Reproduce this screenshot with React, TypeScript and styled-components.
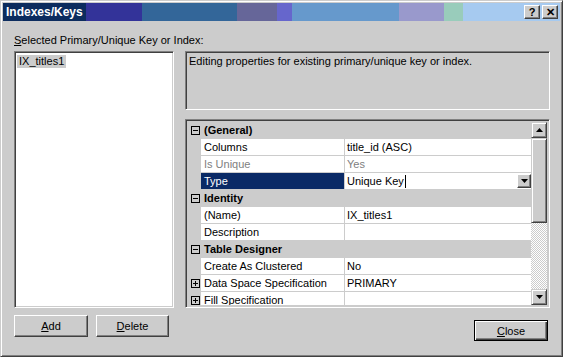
import React from 'react';
import styled, { createGlobalStyle } from 'styled-components';

const face = '#cccccc';
const dark = '#404040';
const shadow = '#808080';
const navy = '#0a2a66';

const rows = [
  { kind: 'cat', name: '(General)' },
  { name: 'Columns', value: 'title_id (ASC)' },
  { name: 'Is Unique', value: 'Yes', disabled: true },
  { name: 'Type', value: 'Unique Key', selected: true },
  { kind: 'cat', name: 'Identity' },
  { name: '(Name)', value: 'IX_titles1' },
  { name: 'Description', value: '' },
  { kind: 'cat', name: 'Table Designer' },
  { name: 'Create As Clustered', value: 'No' },
  { name: 'Data Space Specification', value: 'PRIMARY', expand: true },
  { name: 'Fill Specification', value: '', expand: true },
];

const GlobalStyle = createGlobalStyle`
  html, body {
    margin: 0;
    padding: 0;
    background: ${face};
  }
  body {
    font-family: 'Liberation Sans', Arial, sans-serif;
    font-size: 11px;
    color: #000;
  }
`;

const Window = styled.div`
  width: 563px;
  height: 357px;
  box-sizing: border-box;
  background: ${face};
  border: 1px solid;
  border-color: ${face} ${dark} ${dark} ${face};
  box-shadow: inset 1px 1px #fff, inset -1px -1px ${shadow};
  padding: 2px;
  display: flex;
  flex-direction: column;
`;

const TitleBar = styled.div`
  height: 18px;
  flex: none;
  display: flex;
  align-items: center;
  padding-left: 3px;
  background: linear-gradient(
    to right,
    #0c2c5e 0 83px,
    #333399 83px 139px,
    #336699 139px 234px,
    #666699 234px 274px,
    #6666cc 274px 289px,
    #6699cc 289px 396px,
    #9999cc 396px 441px,
    #99ccbb 441px 460px,
    #a6caf0 460px
  );
`;

const Title = styled.span`
  flex: 1;
  color: #fff;
  font-weight: bold;
  font-size: 12px;
`;

const CaptionButton = styled.div`
  width: 16px;
  height: 14px;
  box-sizing: border-box;
  margin-right: 2px;
  background: ${face};
  border: 1px solid;
  border-color: #fff ${dark} ${dark} #fff;
  box-shadow: inset -1px -1px ${shadow};
  display: flex;
  align-items: center;
  justify-content: center;
  font-weight: bold;
  font-size: 11px;
  line-height: 1;
`;

const Content = styled.div`
  flex: 1;
  display: flex;
  flex-direction: column;
  padding: 13px 10px 0 11px;
`;

const Label = styled.div`
  line-height: 13px;
  height: 13px;
  margin-bottom: 4px;
  white-space: nowrap;
`;

const Main = styled.div`
  height: 257px;
  display: flex;
  gap: 11px;
`;

const Sunken = styled.div`
  box-sizing: border-box;
  border: 1px solid;
  border-color: ${shadow} #fff #fff ${shadow};
  box-shadow: inset 1px 1px ${dark}, inset -1px -1px ${face};
`;

const ListBox = styled(Sunken)`
  width: 160px;
  flex: none;
  background: #fff;
  padding: 3px 2px;
`;

const ListItem = styled.div<{ $active?: boolean }>`
  display: inline-block;
  padding: 0 2px;
  line-height: 13px;
  background: ${(p) => (p.$active ? face : 'transparent')};
`;

const RightColumn = styled.div`
  flex: 1;
  display: flex;
  flex-direction: column;
  gap: 9px;
`;

const DescriptionBox = styled(Sunken)`
  height: 59px;
  padding: 3px 3px;
  line-height: 13px;
`;

const PropertyGrid = styled(Sunken)`
  height: 189px;
  padding: 2px;
  display: flex;
  background: ${face};
`;

const Rows = styled.div`
  flex: 1;
  overflow: hidden;
`;

const Row = styled.div`
  display: grid;
  grid-template-columns: 13px 144px 1fr;
  height: 17px;
`;

const Gutter = styled.div`
  display: flex;
  align-items: center;
  justify-content: center;
  padding-left: 1px;
  background: ${face};
`;

const CategoryName = styled.div`
  grid-column: 2 / 4;
  font-weight: bold;
  line-height: 17px;
  padding-left: 3px;
`;

const NameCell = styled.div<{ $selected?: boolean; $disabled?: boolean }>`
  box-sizing: border-box;
  background: ${(p) => (p.$selected ? navy : '#fff')};
  color: ${(p) => (p.$selected ? '#fff' : p.$disabled ? shadow : '#000')};
  border-right: 1px solid ${face};
  border-bottom: 1px solid ${face};
  padding-left: 3px;
  line-height: 16px;
  white-space: nowrap;
  overflow: hidden;
`;

const ValueCell = styled.div<{ $disabled?: boolean }>`
  box-sizing: border-box;
  background: #fff;
  color: ${(p) => (p.$disabled ? shadow : '#000')};
  border-bottom: 1px solid ${face};
  padding-left: 2px;
  line-height: 16px;
  display: flex;
  align-items: center;
  white-space: nowrap;
`;

const Caret = styled.span`
  display: inline-block;
  width: 1px;
  height: 13px;
  background: #000;
  margin-left: 1px;
`;

const DropButton = styled.div`
  margin-left: auto;
  width: 14px;
  height: 14px;
  box-sizing: border-box;
  background: ${face};
  border: 1px solid;
  border-color: #fff ${dark} ${dark} #fff;
  box-shadow: inset -1px -1px ${shadow};
  display: flex;
  align-items: center;
  justify-content: center;
`;

const ScrollBar = styled.div`
  width: 16px;
  flex: none;
  display: flex;
  flex-direction: column;
`;

const ScrollButton = styled.div`
  height: 16px;
  box-sizing: border-box;
  background: ${face};
  border: 1px solid;
  border-color: ${face} ${dark} ${dark} ${face};
  box-shadow: inset 1px 1px #fff, inset -1px -1px ${shadow};
  display: flex;
  align-items: center;
  justify-content: center;
`;

const Thumb = styled(ScrollButton)`
  height: 85px;
`;

const Track = styled.div`
  flex: 1;
  background: repeating-conic-gradient(#fff 0 25%, ${face} 0 50%) 0 0 / 2px 2px;
`;

const Footer = styled.div`
  display: flex;
  align-items: flex-start;
  gap: 8px;
  margin-top: 7px;
  padding-right: 2px;
`;

const Button = styled.div<{ $width: number; $default?: boolean }>`
  width: ${(p) => p.$width}px;
  height: ${(p) => (p.$default ? 21 : 22)}px;
  box-sizing: border-box;
  background: ${face};
  border: 1px solid;
  border-color: ${(p) => (p.$default ? '#000' : `#fff ${dark} ${dark} #fff`)};
  box-shadow: ${(p) =>
    p.$default
      ? `inset 1px 1px #fff, inset -1px -1px ${dark}, inset -2px -2px ${shadow}`
      : `inset -1px -1px ${shadow}`};
  display: flex;
  align-items: center;
  justify-content: center;
  margin-top: ${(p) => (p.$default ? '5px' : '0')};
  margin-left: ${(p) => (p.$default ? 'auto' : '0')};
`;

const Arrow = ({ down }: { down?: boolean }) => (
  <svg width="7" height="4" viewBox="0 0 7 4">
    <polygon points={down ? '0,0 7,0 3.5,4' : '0,4 7,4 3.5,0'} fill="#000" />
  </svg>
);

const ExpandBox = ({ open }: { open?: boolean }) => (
  <svg width="9" height="9" viewBox="0 0 9 9">
    <rect x="0.5" y="0.5" width="8" height="8" fill="none" stroke="#000" />
    <line x1="2" y1="4.5" x2="7" y2="4.5" stroke="#000" />
    {!open && <line x1="4.5" y1="2" x2="4.5" y2="7" stroke="#000" />}
  </svg>
);

const App = () => {
  return (
    <>
      <GlobalStyle />
      <Window>
        <TitleBar>
          <Title>Indexes/Keys</Title>
          <CaptionButton>?</CaptionButton>
          <CaptionButton>✕</CaptionButton>
        </TitleBar>
        <Content>
          <Label>
            <u>S</u>elected Primary/Unique Key or Index:
          </Label>
          <Main>
            <ListBox>
              <ListItem $active>IX_titles1</ListItem>
            </ListBox>
            <RightColumn>
              <DescriptionBox>Editing properties for existing primary/unique key or index.</DescriptionBox>
              <PropertyGrid>
                <Rows>
                  {rows.map((row) =>
                    row.kind === 'cat' ? (
                      <Row key={row.name}>
                        <Gutter>
                          <ExpandBox open />
                        </Gutter>
                        <CategoryName>{row.name}</CategoryName>
                      </Row>
                    ) : (
                      <Row key={row.name}>
                        <Gutter>{row.expand && <ExpandBox />}</Gutter>
                        <NameCell $selected={row.selected} $disabled={row.disabled}>
                          {row.name}
                        </NameCell>
                        <ValueCell $disabled={row.disabled}>
                          {row.value}
                          {row.selected && (
                            <>
                              <Caret />
                              <DropButton>
                                <Arrow down />
                              </DropButton>
                            </>
                          )}
                        </ValueCell>
                      </Row>
                    )
                  )}
                </Rows>
                <ScrollBar>
                  <ScrollButton>
                    <Arrow />
                  </ScrollButton>
                  <Thumb />
                  <Track />
                  <ScrollButton>
                    <Arrow down />
                  </ScrollButton>
                </ScrollBar>
              </PropertyGrid>
            </RightColumn>
          </Main>
          <Footer>
            <Button $width={74}>
              <span>
                <u>A</u>dd
              </span>
            </Button>
            <Button $width={73}>
              <span>
                <u>D</u>elete
              </span>
            </Button>
            <Button $width={74} $default>
              <span>
                <u>C</u>lose
              </span>
            </Button>
          </Footer>
        </Content>
      </Window>
    </>
  );
};

export default App;
